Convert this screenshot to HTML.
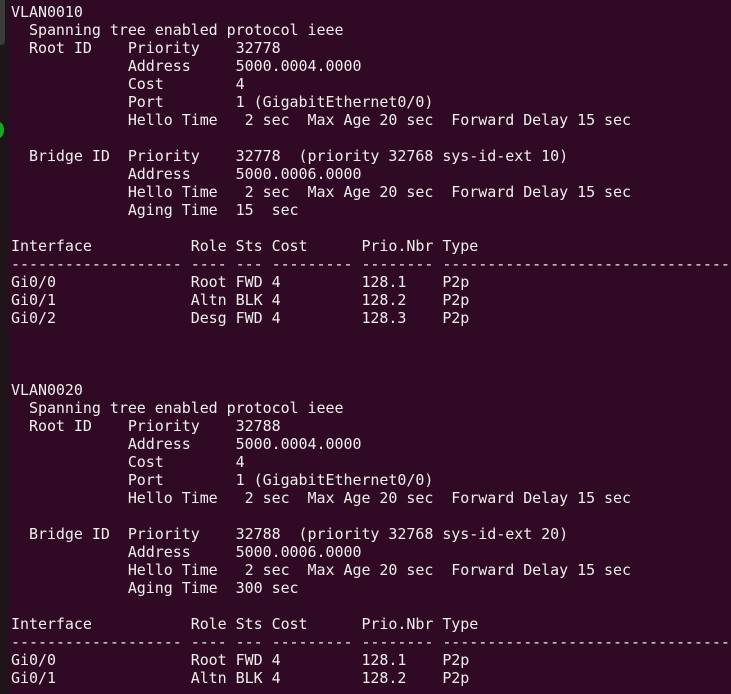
<!DOCTYPE html>
<html><head><meta charset="utf-8"><style>
html,body{margin:0;padding:0;}
body{width:731px;height:694px;background:#300a24;overflow:hidden;position:relative;}
#strip{position:absolute;left:0;top:0;width:9px;height:694px;background:#1f1419;}
#gray{position:absolute;left:0;top:0;width:5px;height:45px;background:#3b3b3b;border-radius:0 0 4px 0;}
#dot{position:absolute;left:-6px;top:122px;width:10px;height:16px;border-radius:50%;background:#1fa51f;}
pre{position:absolute;left:11px;top:3px;margin:0;font-family:"DejaVu Sans Mono","Liberation Mono",monospace;font-size:15px;letter-spacing:-0.045px;line-height:18px;color:#eeeeec;white-space:pre;}
</style></head><body>
<div id="strip"></div><div id="gray"></div><div id="dot"></div>
<pre>VLAN0010
  Spanning tree enabled protocol ieee
  Root ID    Priority    32778
             Address     5000.0004.0000
             Cost        4
             Port        1 (GigabitEthernet0/0)
             Hello Time   2 sec  Max Age 20 sec  Forward Delay 15 sec

  Bridge ID  Priority    32778  (priority 32768 sys-id-ext 10)
             Address     5000.0006.0000
             Hello Time   2 sec  Max Age 20 sec  Forward Delay 15 sec
             Aging Time  15  sec

Interface           Role Sts Cost      Prio.Nbr Type
------------------- ---- --- --------- -------- --------------------------------
Gi0/0               Root FWD 4         128.1    P2p
Gi0/1               Altn BLK 4         128.2    P2p
Gi0/2               Desg FWD 4         128.3    P2p



VLAN0020
  Spanning tree enabled protocol ieee
  Root ID    Priority    32788
             Address     5000.0004.0000
             Cost        4
             Port        1 (GigabitEthernet0/0)
             Hello Time   2 sec  Max Age 20 sec  Forward Delay 15 sec

  Bridge ID  Priority    32788  (priority 32768 sys-id-ext 20)
             Address     5000.0006.0000
             Hello Time   2 sec  Max Age 20 sec  Forward Delay 15 sec
             Aging Time  300 sec

Interface           Role Sts Cost      Prio.Nbr Type
------------------- ---- --- --------- -------- --------------------------------
Gi0/0               Root FWD 4         128.1    P2p
Gi0/1               Altn BLK 4         128.2    P2p
</pre>
</body></html>
